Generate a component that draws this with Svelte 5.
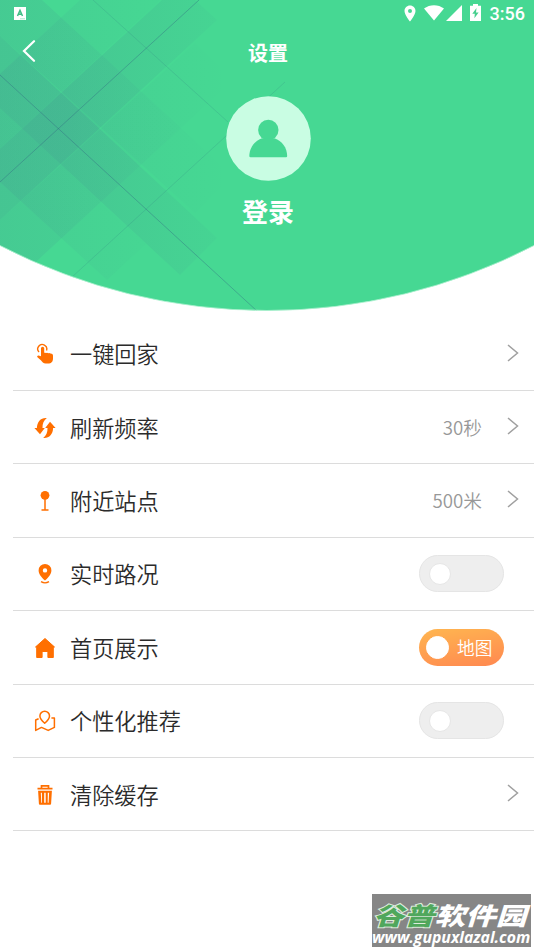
<script lang="ts">
type Item = {
	icon: string;
	label: string;
	value?: string;
	kind: "link" | "switch";
	on?: boolean;
	onText?: string;
};

let items: Item[] = $state([
	{ icon: "tap", label: "一键回家", kind: "link" },
	{ icon: "refresh", label: "刷新频率", value: "30秒", kind: "link" },
	{ icon: "stop", label: "附近站点", value: "500米", kind: "link" },
	{ icon: "traffic", label: "实时路况", kind: "switch", on: false },
	{ icon: "home", label: "首页展示", kind: "switch", on: true, onText: "地图" },
	{ icon: "map", label: "个性化推荐", kind: "switch", on: false },
	{ icon: "trash", label: "清除缓存", kind: "link" },
]);

function toggle(item: Item) {
	item.on = !item.on;
}
</script>

<div class="page">
	<header class="hero">
		<svg class="hero-bg" viewBox="0 0 534 312" aria-hidden="true">
			<defs>
				<clipPath id="dome"><circle cx="267" cy="-270.500" r="581" /></clipPath>
				<linearGradient id="long" gradientUnits="userSpaceOnUse" x1="0" y1="0" x2="217" y2="0">
					<stop offset="0" stop-color="#41698f" stop-opacity=".17" />
					<stop offset=".3" stop-color="#41698f" stop-opacity=".15" />
					<stop offset="1" stop-color="#41698f" stop-opacity=".035" />
				</linearGradient>
				<linearGradient id="wide" gradientUnits="userSpaceOnUse" x1="0" y1="0" x2="225" y2="0">
					<stop offset="0" stop-color="#41698f" stop-opacity=".12" />
					<stop offset="1" stop-color="#41698f" stop-opacity="0" />
				</linearGradient>
				<linearGradient id="short" gradientUnits="userSpaceOnUse" x1="0" y1="0" x2="150" y2="0">
					<stop offset="0" stop-color="#41698f" stop-opacity=".1" />
					<stop offset="1" stop-color="#41698f" stop-opacity=".012" />
				</linearGradient>
			</defs>
			<g clip-path="url(#dome)">
				<rect width="534" height="312" fill="#46d893" />
				<path d="M0 36 217 238 180 275 0 108Z" fill="url(#long)" />
				<path d="M0 220 217 20 195 0 162 0 0 149Z" fill="url(#long)" />
				<path d="M0-39 42 0 233 176 195 213 0 36Z" fill="url(#wide)" />
				<path d="M0 295 233 80 195 43 0 220Z" fill="url(#wide)" />
				<path d="M0 182 107 280 146 244 0 108Z" fill="url(#short)" />
				<path d="M0 74 80 0 160 0 0 149Z" fill="url(#short)" />
				<g fill="none" stroke="#315d80" stroke-width="1">
					<path d="M0 75 257 311M0 182 199 0" opacity=".35" />
					<path d="M93 0 228 122M72 277 285 82" opacity=".15" />
				</g>
			</g>
			<path d="M0 245.500A581 581 0 0 0 534 245.500" fill="none" stroke="#a8f0cd" stroke-width=".8" />
		</svg>

		<div class="status">
			<svg class="ime" viewBox="0 0 12 13">
				<path fill="#fff" d="M0 0h12v13H0z" />
				<path d="M3.500 9 6 3.400 8.500 9M4.500 7.300h3" fill="none" stroke="#40bd85" stroke-width="1.500" />
				<path d="M6 11.800h5" stroke="#8addb5" stroke-width=".7" />
			</svg>
			<div class="tray">
				<svg width="12" height="17" viewBox="0 0 12 17">
					<path fill="#fff" fill-rule="evenodd" d="M6 .5C2.900.5.5 2.900.5 6c0 4 5.500 10.500 5.500 10.500S11.500 10 11.500 6C11.500 2.900 9.100.5 6 .5Zm0 3.400a2 2 0 1 1 0 4 2 2 0 0 1 0-4Z" />
				</svg>
				<svg class="wifi" width="20" height="16" viewBox="0 0 20 16">
					<path fill="#fff" d="M0 3.500C5.800-1 14.200-1 20 3.500L10 15.500Z" />
				</svg>
				<svg class="signal" width="16" height="16" viewBox="0 0 16 16">
					<path fill="#fff" d="M16 0v16H0Z" />
				</svg>
				<svg class="battery" width="11" height="17" viewBox="0 0 11 17">
					<path fill="#fff" d="M3 0h5v1.800h3V17H0V1.800h3Z" />
					<path fill="#46cf8e" d="M6.500 4 2.300 9.800h2.500L4.400 14.300 8.600 8.500H6Z" />
				</svg>
				<span class="clock">3:56</span>
			</div>
		</div>

		<div class="navbar">
			<button class="back" aria-label="返回">
				<svg width="14" height="22" viewBox="0 0 14 22">
					<path d="M12 1.200 2 11l10 9.800" fill="none" stroke="#fff" stroke-width="2.200" stroke-linecap="round" />
				</svg>
			</button>
			<h1>设置</h1>
		</div>

		<button class="profile">
			<svg class="avatar" viewBox="0 0 85 85">
				<circle cx="42.500" cy="42.500" r="42.300" fill="#c9fde3" />
				<circle cx="42.300" cy="34" r="10.200" fill="#46d893" />
				<path fill="#46d893" d="M36 42.300h12.500c7.500 2.700 12.500 9.200 12.700 17.800q0 1.200-1.200 1.200H24.500q-1.200 0-1.200-1.200c.2-8.600 5.200-15.100 12.700-17.800Z" />
			</svg>
			<span class="login">登录</span>
		</button>
	</header>

	<main class="list">
		{#each items as item}
			<div class="row">
				<svg class="icon" viewBox="0 0 22 22">
					{#if item.icon === "tap"}
						<path d="M5 9.100A4.500 4.500 0 1 1 12.500 7.500" fill="none" stroke="#ff6f00" stroke-width="1.400" />
						<path fill="#ff6f00" d="M7 5.300q0-1.500 1.600-1.500t1.600 1.500v4.500q1-.4 1.900.2 1.200-.6 2.100.2 1.300-.5 2.300.3 2.500-.1 2.500 1.900v3c0 3.400-2.100 5.200-4.800 5.200h-2.500c-2.500 0-3.500-1.700-4.600-3.100L3.200 13.900q-.4-1.600 1.300-1.500l2.500.8Z" />
					{:else if item.icon === "refresh"}
						<path fill="#ff6f00" d="M12.800 1C7 .4 3.100 4.500 2.900 11H.4l5.600 6.200 4.800-6.200H8.500C8.300 6.500 9.800 3.500 12.800 1ZM9.200 21c5.800.6 9.700-3.500 9.900-10h2.500L16 4.800 11.200 11h2.300c.2 4.500-1.300 7.500-4.300 10Z" />
					{:else if item.icon === "stop"}
						<circle cx="11" cy="5.300" r="4.400" fill="#ff6f00" />
						<path d="M11 8v11.700M7.500 20.100h7" stroke="#ff6f00" stroke-width="1.500" />
					{:else if item.icon === "traffic"}
						<path fill="#ff6f00" fill-rule="evenodd" d="M11 1a6.400 6.400 0 0 0-6.400 6.400c0 4.300 4.100 7.800 6.400 10.100 2.300-2.300 6.400-5.800 6.400-10.100A6.400 6.400 0 0 0 11 1Zm0 4.200a2.200 2.200 0 1 1 0 4.400 2.200 2.200 0 0 1 0-4.400Z" />
						<path d="M7 18.600q4 2.500 8 0" fill="none" stroke="#ff6f00" stroke-width="1.300" />
					{:else if item.icon === "home"}
						<path fill="#ff6f00" stroke="#ff6f00" stroke-width="1" stroke-linejoin="round" d="M11 1.500 1.500 10h1.200v10.500h5.400v-6h5.800v6h5.400V10h1.200Z" />
					{:else if item.icon === "map"}
						<g fill="none" stroke="#ff6f00" stroke-width="1.500" stroke-linejoin="round">
							<path d="M10.700 13.200C8 10.900 5.900 9 5.900 6a4.800 4.800 0 1 1 9.600 0c0 3-2.100 4.900-4.800 7.200Z" />
							<path d="M4.600 8.700 1.700 10v10.400l5.800-3 6.700 3 6.200-3V8.100h-3" />
						</g>
					{:else}
						<path d="M7.500 4V1.800h7V4M3.500 4.700h15" fill="none" stroke="#ff6f00" stroke-width="1.700" />
						<path fill="#ff6f00" fill-rule="evenodd" d="M4.100 6.700h13.800l-.8 13q-.1 1-1 1H5.900q-.9 0-1-1Zm2.700 2 .5 10H8l-.1-10Zm3.400 0v10h1.500v-10Zm3.600 0-.1 10h.9l.5-10Z" />
					{/if}
				</svg>
				<span class="label">{item.label}</span>
				{#if item.kind === "link"}
					{#if item.value}<span class="value">{item.value}</span>{/if}
					<svg class="arrow" width="12" height="18" viewBox="0 0 12 18">
						<path d="M1 1 10.500 9 1 17" fill="none" stroke="#a0a0a0" stroke-width="1.500" />
					</svg>
				{:else}
					<button
						class="switch"
						class:on={item.on}
						role="switch"
						aria-checked={item.on}
						aria-label={item.label}
						onclick={() => toggle(item)}
					>
						<span class="knob"></span>
						{#if item.on && item.onText}<span class="on-text">{item.onText}</span>{/if}
					</button>
				{/if}
			</div>
		{/each}
	</main>

	<div class="watermark">
		<div class="brand"><span class="brand-green">谷普</span>软件园</div>
		<div class="site">www.gupuxlazal.com</div>
	</div>
</div>

<style>
	:global(body) {
		background: #fff;
	}

	.page {
		position: relative;
		width: 534px;
		height: 950px;
		overflow: hidden;
		font-family: "Noto Sans CJK SC", sans-serif;
		color: #2b2b2b;
		background: #fff;
	}

	button {
		padding: 0;
		border: none;
		background: none;
		font: inherit;
		color: inherit;
		cursor: pointer;
	}

	svg {
		display: block;
		flex: none;
	}

	.hero {
		position: relative;
		height: 317.400px;
		color: #fff;
	}

	.hero-bg {
		position: absolute;
		inset: 0;
		width: 534px;
		height: 312px;
	}

	.status,
	.navbar,
	.profile {
		position: relative;
	}

	.status {
		display: flex;
		align-items: center;
		justify-content: space-between;
		height: 26px;
		padding: 0 9px 0 14px;
	}

	.ime {
		width: 12px;
		height: 13px;
	}

	.tray {
		display: flex;
		align-items: center;
	}

	.wifi {
		margin-left: 8px;
		margin-bottom: 1px;
	}

	.signal {
		margin-left: 2px;
	}

	.battery {
		margin-left: 8px;
		margin-bottom: 1px;
	}

	.clock {
		margin-left: 9px;
		padding-top: 1px;
		font: 500 18px/26px Roboto, sans-serif;
	}

	.navbar {
		display: grid;
		grid-template-columns: 60px 1fr 58px;
		align-items: center;
		height: 52px;
	}

	.back {
		justify-self: start;
		margin-left: 22px;
		margin-bottom: 2px;
	}

	h1 {
		margin: 1px 0 0;
		font-size: 20px;
		font-weight: 700;
		line-height: 30px;
		text-align: center;
	}

	.profile {
		display: flex;
		flex-direction: column;
		align-items: center;
		width: 100px;
		margin: 18.400px auto 0 218px;
	}

	.avatar {
		width: 85px;
		height: 85px;
	}

	.login {
		margin-top: 11px;
		font-size: 26px;
		font-weight: 700;
		line-height: 38px;
	}

	.row {
		display: flex;
		align-items: center;
		box-sizing: border-box;
		height: 73.450px;
		margin-left: 13px;
		padding: 1px 15px 0 21px;
		border-bottom: 1px solid #dcdcdc;
	}

	.icon {
		width: 22px;
		height: 22px;
	}

	.label {
		flex: 1;
		margin: 0 0 2px 14px;
		font-size: 22.200px;
		font-weight: 350;
		line-height: 34px;
	}

	.value {
		margin-right: 25px;
		margin-bottom: 2px;
		font-size: 18.700px;
		font-weight: 350;
		line-height: 28px;
		color: #989898;
	}

	.arrow {
		margin-bottom: 3px;
	}

	.switch {
		display: flex;
		align-items: center;
		box-sizing: border-box;
		width: 85px;
		height: 37px;
		margin-right: 15px;
		margin-bottom: 1px;
		padding-left: 9px;
		border: 1px solid #e5e5e5;
		border-radius: 19px;
		background: #eee;
	}

	.knob {
		box-sizing: border-box;
		width: 22px;
		height: 22px;
		border: 1px solid #e6e6e6;
		border-radius: 50%;
		background: #fff;
	}

	.switch.on {
		padding-left: 7px;
		border: none;
		background: linear-gradient(170deg, #ffb650, #ff8850);
	}

	.on .knob {
		width: 23px;
		height: 23px;
		border-color: #fff;
	}

	.on-text {
		margin-left: 8px;
		font-size: 17.700px;
		font-weight: 350;
		line-height: 26px;
		color: #fff;
	}

	.watermark {
		position: absolute;
		left: 372px;
		top: 894px;
		width: 159px;
		height: 53px;
		overflow: hidden;
		color: #fff;
		background: #868686;
		white-space: nowrap;
	}

	.brand {
		width: 125px;
		padding: 7px 0 0 1px;
		font-size: 24.500px;
		font-style: italic;
		font-weight: 900;
		line-height: 27px;
		transform: scaleX(1.25);
		transform-origin: left;
	}

	.brand-green {
		color: #50a75c;
		-webkit-text-stroke: 2px #dcebdc;
		paint-order: stroke fill;
	}

	.site {
		font: italic 700 15.800px/19px "Open Sans", sans-serif;
	}
</style>
